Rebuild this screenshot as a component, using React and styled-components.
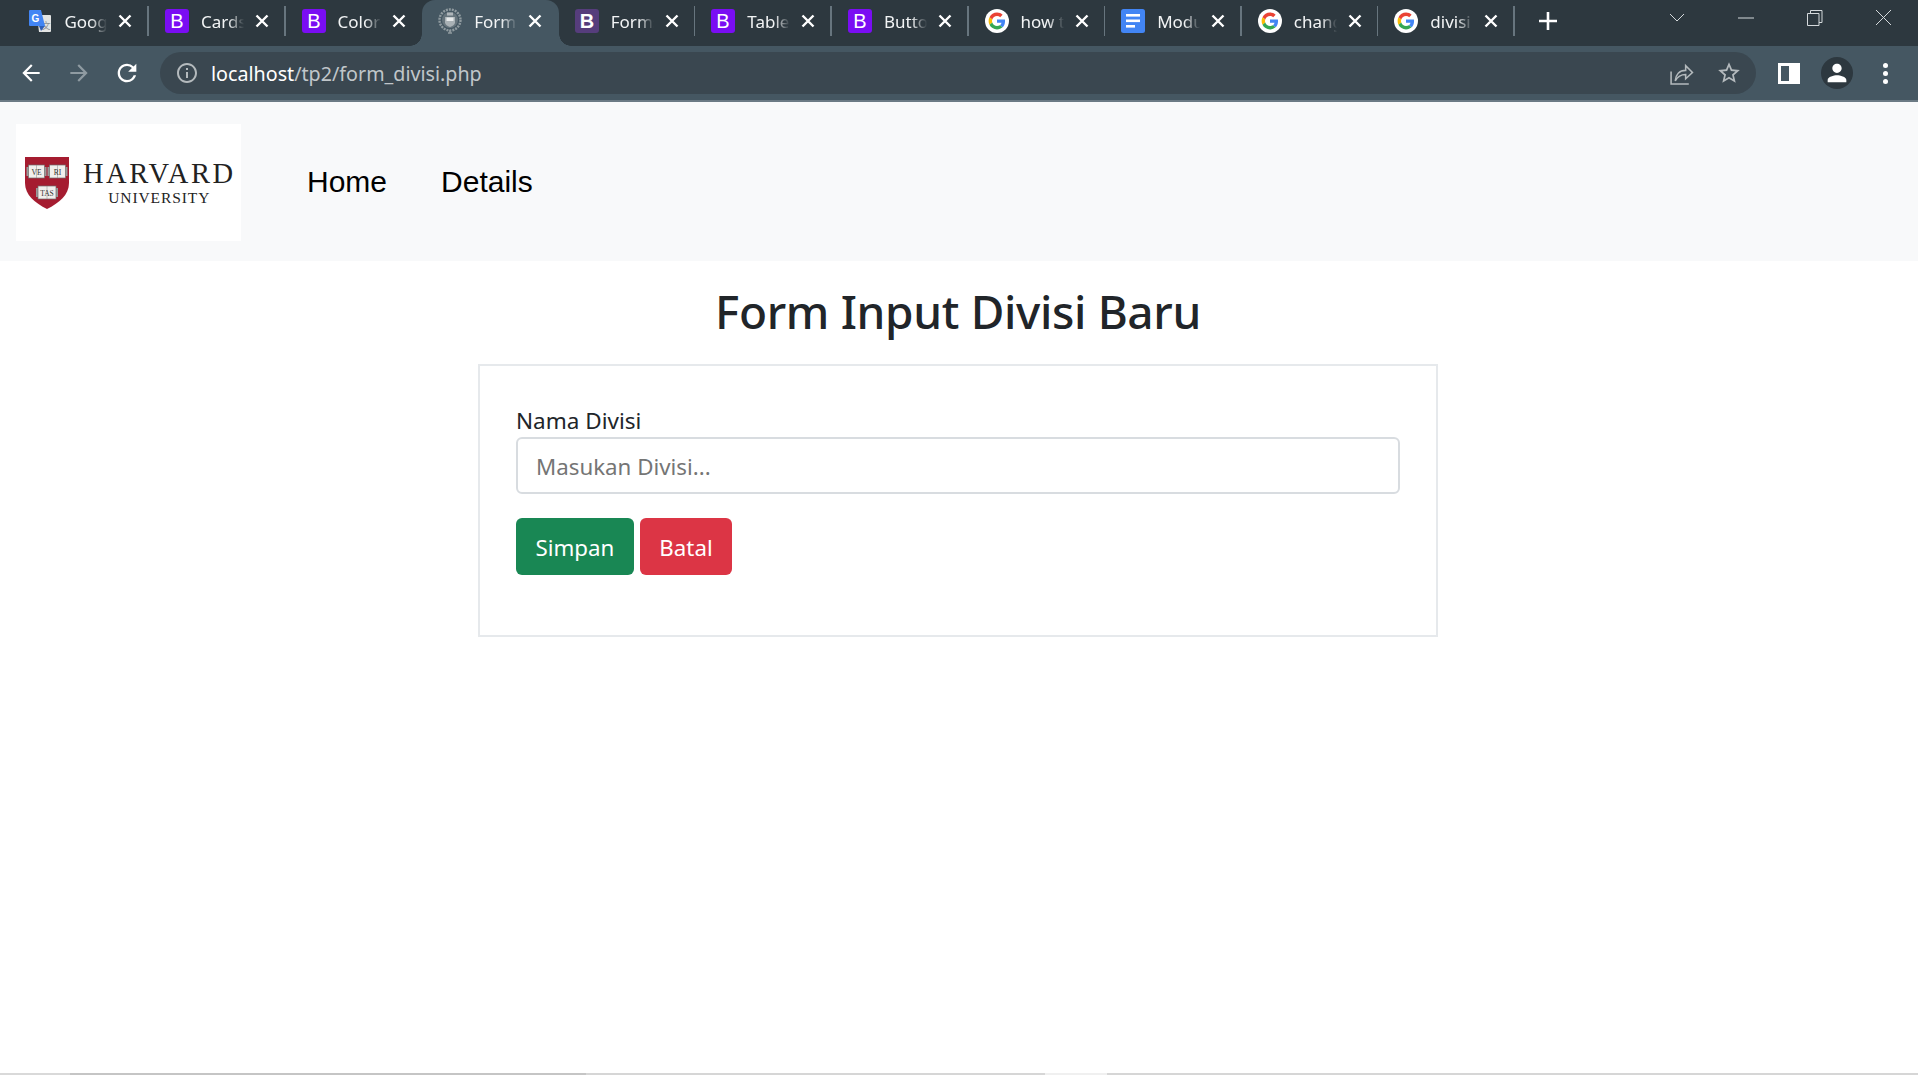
import React from "react";
import styled, { createGlobalStyle } from "styled-components";

const GlobalStyle = createGlobalStyle`
  * {
    box-sizing: border-box;
  }
  html,
  body {
    margin: 0;
    padding: 0;
    background: #fff;
    overflow: hidden;
  }
`;

const uiFont = `"Noto Sans", "Open Sans", sans-serif`;

const GoogleIcon = () => (
  <svg width="24" height="24" viewBox="0 0 24 24">
    <circle cx="12" cy="12" r="12" fill="#fff" />
    <g transform="translate(3.6 3.6) scale(0.35)">
      <path fill="#EA4335" d="M24 9.5c3.54 0 6.71 1.22 9.21 3.6l6.85-6.85C35.9 2.38 30.47 0 24 0 14.62 0 6.51 5.38 2.56 13.22l7.98 6.19C12.43 13.72 17.74 9.5 24 9.5z" />
      <path fill="#4285F4" d="M46.98 24.55c0-1.57-.15-3.09-.38-4.55H24v9.02h12.94c-.58 2.96-2.26 5.48-4.78 7.18l7.73 6c4.51-4.18 7.09-10.36 7.09-17.65z" />
      <path fill="#FBBC05" d="M10.53 28.59c-.48-1.45-.76-2.99-.76-4.59s.27-3.14.76-4.59l-7.98-6.19C.92 16.46 0 20.12 0 24c0 3.88.92 7.54 2.56 10.78l7.97-6.19z" />
      <path fill="#34A853" d="M24 48c6.48 0 11.93-2.13 15.89-5.81l-7.73-6c-2.15 1.45-4.92 2.3-8.16 2.3-6.26 0-11.57-4.22-13.47-9.91l-7.98 6.19C6.51 42.62 14.62 48 24 48z" />
    </g>
  </svg>
);

const BootstrapIcon = ({ $old }) => (
  <svg width="24" height="24" viewBox="0 0 24 24">
    <rect width="24" height="24" rx="3" fill={$old ? "#563d7c" : "#7a0df3"} />
    <text
      x="12"
      y="19"
      textAnchor="middle"
      fontFamily="Liberation Sans"
      fontWeight={$old ? "700" : "400"}
      fontSize="20"
      fill="#fff"
    >
      B
    </text>
  </svg>
);

const TranslateIcon = () => (
  <svg width="24" height="24" viewBox="0 0 24 24">
    <path d="M9 6h13a1 1 0 0 1 1 1v15a1 1 0 0 1-1 1H11z" fill="#e3e4e3" />
    <text x="18" y="20" textAnchor="middle" fontFamily="Noto Sans CJK SC" fontSize="9" fill="#8b8f92">
      文
    </text>
    <path d="M2 1h11l4 16H2a1 1 0 0 1-1-1V2a1 1 0 0 1 1-1z" fill="#4285f4" />
    <path d="M11 17l2 5 4-5z" fill="#2f5fb8" />
    <text x="7.5" y="12.5" textAnchor="middle" fontFamily="Liberation Sans" fontWeight="700" fontSize="10" fill="#fff">
      G
    </text>
  </svg>
);

const DocsIcon = () => (
  <svg width="24" height="24" viewBox="0 0 24 24">
    <rect width="24" height="24" rx="2.5" fill="#4285f4" />
    <rect x="5" y="5" width="14" height="2.6" fill="#fff" />
    <rect x="5" y="10.5" width="14" height="2.6" fill="#fff" />
    <rect x="5" y="16" width="9" height="2.6" fill="#fff" />
  </svg>
);

const CrestIcon = () => (
  <svg width="24" height="26" viewBox="0 0 24 26">
    <circle cx="12" cy="12" r="10.5" fill="none" stroke="#8f9a9f" strokeWidth="2.4" strokeDasharray="2 1" />
    <circle cx="12" cy="12" r="8" fill="#66747c" />
    <path d="M7 9h10v5.5c0 2-2.5 3.5-5 4.5-2.500-1-5-2.500-5-4.500z" fill="#a9b1b5" />
    <rect x="8.500" y="9.500" width="7" height="3.500" fill="#e6e9ea" />
    <rect x="9" y="4.500" width="6" height="3" fill="#aeb5b9" />
    <path d="M12 22v3M10 25h4" stroke="#8f9a9f" strokeWidth="1.600" />
  </svg>
);

const Book = ({ x, y, w, label }) => (
  <g>
    <rect x={x - 2} y={y + 2} width={w + 4} height="9" fill="#9a9a9a" />
    <rect x={x} y={y} width={w} height="13" fill="#f1efec" stroke="#6d6d6d" strokeWidth="0.7" />
    <path d={`M${x + w / 2} ${y}v13`} stroke="#8a8a8a" strokeWidth="0.5" />
    <text x={x + w / 2} y={y + 9.5} fontFamily="Liberation Serif" fontSize="7.5" fill="#333" textAnchor="middle">
      {label}
    </text>
  </g>
);

const tabs = [
  { title: "Google Translate", icon: <TranslateIcon /> },
  { title: "Cards", icon: <BootstrapIcon /> },
  { title: "Colors", icon: <BootstrapIcon /> },
  { title: "Form Input", icon: <CrestIcon />, active: true },
  { title: "Forms", icon: <BootstrapIcon $old /> },
  { title: "Tables", icon: <BootstrapIcon /> },
  { title: "Buttons", icon: <BootstrapIcon /> },
  { title: "how to", icon: <GoogleIcon /> },
  { title: "Module", icon: <DocsIcon /> },
  { title: "change", icon: <GoogleIcon /> },
  { title: "divisi", icon: <GoogleIcon /> },
];

const App = () => {
  return (
    <>
      <GlobalStyle />
      <Page>
        <TabStrip>
          {tabs.map((tab, index) => (
            <Tab key={index} $active={tab.active} $hideLine={tabs[index + 1]?.active}>
              <TabIcon>{tab.icon}</TabIcon>
              <TabTitle>{tab.title}</TabTitle>
              <CloseIcon viewBox="0 0 14 14">
                <path d="M1.500 1.500l11 11M12.500 1.500l-11 11" />
              </CloseIcon>
            </Tab>
          ))}
          <NewTab viewBox="0 0 18 18">
            <path d="M9 0v18M0 9h18" />
          </NewTab>
          <WindowButtons>
            <WindowButton>
              <svg width="16" height="10" viewBox="0 0 16 10">
                <path d="M1 1l7 7 7-7" />
              </svg>
            </WindowButton>
            <WindowButton>
              <svg width="16" height="2" viewBox="0 0 16 2">
                <path d="M0 1h16" />
              </svg>
            </WindowButton>
            <WindowButton>
              <svg width="16" height="16" viewBox="0 0 16 16">
                <path d="M.5 3.500h11.500v12H.5zM3.500 3.500v-3H15v12h-3" />
              </svg>
            </WindowButton>
            <WindowButton>
              <svg width="17" height="17" viewBox="0 0 17 17">
                <path d="M1 1l15 15M16 1L1 16" />
              </svg>
            </WindowButton>
          </WindowButtons>
        </TabStrip>

        <Toolbar>
          <NavIcons>
            <ChromeIcon viewBox="0 0 24 24" $size={26}>
              <path d="M20 11H7.830l5.590-5.590L12 4l-8 8 8 8 1.410-1.410L7.830 13H20v-2z" />
            </ChromeIcon>
            <ChromeIcon viewBox="0 0 24 24" $size={26} $muted>
              <path d="M4 11h12.170l-5.590-5.590L12 4l8 8-8 8-1.410-1.410L16.170 13H4v-2z" />
            </ChromeIcon>
            <ChromeIcon viewBox="0 0 24 24" $size={28}>
              <path d="M17.650 6.350A7.958 7.958 0 0 0 12 4c-4.420 0-7.990 3.580-7.990 8s3.570 8 7.990 8c3.730 0 6.840-2.550 7.730-6h-2.080A5.990 5.990 0 0 1 12 18c-3.310 0-6-2.690-6-6s2.690-6 6-6c1.660 0 3.140.690 4.220 1.780L13 11h7V4l-2.350 2.350z" />
            </ChromeIcon>
          </NavIcons>
          <UrlBar>
            <ChromeIcon viewBox="0 0 24 24" $size={24} $dim>
              <path d="M11 7h2v2h-2zm0 4h2v6h-2zm1-9C6.480 2 2 6.480 2 12s4.480 10 10 10 10-4.480 10-10S17.520 2 12 2zm0 18c-4.410 0-8-3.590-8-8s3.590-8 8-8 8 3.590 8 8-3.590 8-8 8z" />
            </ChromeIcon>
            <UrlText>
              <b>localhost</b>/tp2/form_divisi.php
            </UrlText>
            <UrlActions>
              <ShareIcon viewBox="0 0 24 24">
                <path d="M2 10v12h17" />
                <path d="M6 19c.4-6 4-10 10-10V4.500l6.500 6.500-6.500 6v-4c-4 0-7.500 1.500-10 6z" />
              </ShareIcon>
              <ChromeIcon viewBox="0 0 24 24" $size={26} $dim>
                <path d="M22 9.240l-7.190-.620L12 2 9.190 8.630 2 9.240l5.460 4.730L5.820 21 12 17.270 18.180 21l-1.630-7.030L22 9.240zM12 15.400l-3.760 2.270 1-4.280-3.320-2.880 4.380-.380L12 6.100l1.710 4.040 4.380.380-3.320 2.880 1 4.280L12 15.400z" />
              </ChromeIcon>
            </UrlActions>
          </UrlBar>
          <ToolActions>
            <SidePanel />
            <Avatar>
              <ChromeIcon viewBox="0 0 24 24" $size={28}>
                <path d="M12 12c2.210 0 4-1.790 4-4s-1.790-4-4-4-4 1.790-4 4 1.790 4 4 4zm0 2c-2.670 0-8 1.340-8 4v2h16v-2c0-2.660-5.330-4-8-4z" />
              </ChromeIcon>
            </Avatar>
            <Kebab>
              <i />
              <i />
              <i />
            </Kebab>
          </ToolActions>
        </Toolbar>

        <Navbar>
          <Logo>
            <svg width="44" height="52" viewBox="0 0 44 52">
              <path d="M0 0h44v26c0 12-10 20-22 26C10 46 0 38 0 26z" fill="#a51c30" />
              <Book x={3.5} y={8} w={16} label="VE" />
              <Book x={24.5} y={8} w={16} label="RI" />
              <Book x={13} y={29} w={18} label="TAS" />
            </svg>
            <LogoText>
              <span>HARVARD</span>
              <small>UNIVERSITY</small>
            </LogoText>
          </Logo>
          <NavLinks>
            <NavLink href="#">Home</NavLink>
            <NavLink href="#">Details</NavLink>
          </NavLinks>
        </Navbar>

        <Main>
          <Title>Form Input Divisi Baru</Title>
          <Card>
            <Label htmlFor="divisi">Nama Divisi</Label>
            <Input id="divisi" placeholder="Masukan Divisi..." />
            <Buttons>
              <Button $color="#198754">Simpan</Button>
              <Button $color="#dc3545">Batal</Button>
            </Buttons>
          </Card>
        </Main>

        <ScrollStrip>
          <ScrollPart $width={70} $color="#d9d9d9" />
          <ScrollPart $width={516} $color="#c5c5c5" />
          <ScrollPart $width={459} $color="#d6d6d6" />
          <ScrollPart $width={62} $color="#f0f0f0" />
          <ScrollPart $grow $color="#d6d6d6" />
        </ScrollStrip>
      </Page>
    </>
  );
};

const Page = styled.div`
  width: 1918px;
  height: 1075px;
  display: flex;
  flex-direction: column;
  font-family: ${uiFont};
  overflow: hidden;
`;

const TabStrip = styled.div`
  height: 46px;
  flex: none;
  display: flex;
  align-items: stretch;
  padding-left: 12.4px;
  background: #2d383f;
`;

const Tab = styled.div`
  position: relative;
  width: 136.6px;
  flex: none;
  display: flex;
  align-items: center;
  padding: 0 14px 4px 16px;
  background: ${(props) => (props.$active ? "#455762" : "transparent")};
  border-radius: ${(props) => (props.$active ? "13px 13px 0 0" : "0")};
  color: #f2f4f5;

  ::before {
    content: "";
    display: ${(props) => (props.$active ? "block" : "none")};
    position: absolute;
    left: -12px;
    bottom: 0;
    width: 12px;
    height: 12px;
    background: radial-gradient(circle at 0 0, transparent 11.5px, #455762 12px);
  }

  ::after {
    content: "";
    position: absolute;
    ${(props) =>
      props.$active
        ? `
      right: -12px;
      bottom: 0;
      width: 12px;
      height: 12px;
      background: radial-gradient(circle at 100% 0, transparent 11.5px, #455762 12px);
    `
        : `
      right: 0;
      top: 6px;
      width: 1.500px;
      height: 30px;
      background: ${props.$hideLine ? "transparent" : "#67757e"};
    `}
  }
`;

const TabIcon = styled.div`
  width: 24px;
  height: 26px;
  flex: none;
  display: flex;
  align-items: center;
  justify-content: center;
`;

const TabTitle = styled.div`
  width: 44px;
  margin-left: 12px;
  font-size: 17px;
  white-space: nowrap;
  overflow: hidden;
  -webkit-mask-image: linear-gradient(to right, #000 62%, transparent 98%);
  mask-image: linear-gradient(to right, #000 62%, transparent 98%);
`;

const CloseIcon = styled.svg`
  width: 14px;
  height: 14px;
  flex: none;
  margin-left: 10px;
  fill: none;
  stroke: #fff;
  stroke-width: 2.400;
`;

const NewTab = styled.svg`
  width: 18px;
  height: 18px;
  flex: none;
  align-self: center;
  margin: 0 0 4px 24px;
  fill: none;
  stroke: #fff;
  stroke-width: 2.600;
`;

const WindowButtons = styled.div`
  margin-left: 112px;
  display: flex;
  align-items: flex-start;
  gap: 53px;
  padding-top: 9px;
`;

const WindowButton = styled.div`
  width: 16px;
  height: 17px;
  display: flex;
  align-items: center;
  justify-content: center;

  svg {
    fill: none;
    stroke: #d4d9dc;
    stroke-width: 1;
    flex: none;
  }
`;

const Toolbar = styled.div`
  height: 56px;
  flex: none;
  display: flex;
  align-items: center;
  padding-left: 18px;
  background: #455762;
  border-bottom: 2px solid #6b7a84;
`;

const NavIcons = styled.div`
  width: 142px;
  display: flex;
  align-items: center;
  gap: 21.5px;
`;

const ChromeIcon = styled.svg`
  width: ${(props) => props.$size}px;
  height: ${(props) => props.$size}px;
  flex: none;
  fill: ${(props) => (props.$muted ? "#8f9ba2" : props.$dim ? "#b4babd" : "#fff")};
`;

const UrlBar = styled.div`
  width: 1596px;
  height: 42px;
  display: flex;
  align-items: center;
  padding: 0 14px 0 15px;
  background: #3a4750;
  border-radius: 21px;
`;

const UrlText = styled.div`
  margin-left: 12px;
  font-size: 19.7px;
  color: #c0c6ca;

  b {
    font-weight: 400;
    color: #fff;
  }
`;

const UrlActions = styled.div`
  margin-left: auto;
  display: flex;
  align-items: center;
  gap: 22.5px;
`;

const ShareIcon = styled.svg`
  width: 25px;
  height: 25px;
  fill: none;
  stroke: #b4babd;
  stroke-width: 1.500;
`;

const ToolActions = styled.div`
  display: flex;
  align-items: center;
  margin-left: 22px;
`;

const SidePanel = styled.div`
  width: 22px;
  height: 21px;
  border: 3px solid #fff;
  border-right-width: 11px;
  background: #455762;
`;

const Avatar = styled.div`
  width: 32px;
  height: 32px;
  margin-left: 21px;
  border-radius: 50%;
  background: #2d383f;
  display: flex;
  align-items: center;
  justify-content: center;
`;

const Kebab = styled.div`
  margin-left: 30px;
  display: flex;
  flex-direction: column;
  gap: 3px;

  i {
    display: block;
    width: 5px;
    height: 5px;
    border-radius: 50%;
    background: #fff;
  }
`;

const Navbar = styled.nav`
  height: 159px;
  flex: none;
  display: flex;
  align-items: center;
  padding: 0 16px;
  background: #f8f9fa;
`;

const Logo = styled.div`
  width: 225px;
  height: 117px;
  margin-top: 2px;
  display: flex;
  align-items: center;
  gap: 14px;
  padding-left: 9px;
  background: #fff;
`;

const LogoText = styled.div`
  display: flex;
  flex-direction: column;
  align-items: center;
  font-family: "Liberation Serif", serif;
  color: #222;

  span {
    font-size: 28.5px;
    line-height: 30px;
    letter-spacing: 2.500px;
  }

  small {
    font-size: 15.500px;
    line-height: 18px;
    letter-spacing: 0.900px;
  }
`;

const NavLinks = styled.div`
  display: flex;
  gap: 54px;
  margin-left: 66px;
`;

const NavLink = styled.a`
  font-family: "Liberation Sans", sans-serif;
  font-size: 30px;
  color: #000;
  text-decoration: none;
`;

const Main = styled.main`
  flex: 1;
  display: flex;
  flex-direction: column;
  align-items: center;
  padding-right: 2px;
`;

const Title = styled.h1`
  margin: 17px 0 0;
  height: 86px;
  font-size: 46px;
  line-height: 66px;
  font-weight: 500;
  letter-spacing: -0.35px;
  color: #212529;
`;

const Card = styled.div`
  width: 960px;
  height: 273px;
  display: flex;
  flex-direction: column;
  padding: 38px 36px 0;
  border: 2px solid #e6e9ec;
`;

const Label = styled.label`
  font-size: 22.5px;
  line-height: 33px;
  color: #212529;
`;

const Input = styled.input`
  width: 100%;
  height: 57px;
  padding: 2px 18px 0;
  font-family: ${uiFont};
  font-size: 22.3px;
  color: #212529;
  background: #fff;
  border: 2px solid #d8dce0;
  border-radius: 6px;
  outline: none;

  ::placeholder {
    color: #6c757d;
    opacity: 1;
  }
`;

const Buttons = styled.div`
  display: flex;
  gap: 6px;
  margin-top: 24px;
`;

const Button = styled.button`
  height: 57px;
  padding: 2px 19.5px 0;
  font-family: ${uiFont};
  font-size: 22.3px;
  color: #fff;
  background: ${(props) => props.$color};
  border: none;
  border-radius: 6px;
`;

const ScrollStrip = styled.div`
  height: 2px;
  flex: none;
  display: flex;
`;

const ScrollPart = styled.div`
  width: ${(props) => (props.$grow ? "auto" : `${props.$width}px`)};
  flex: ${(props) => (props.$grow ? 1 : "none")};
  background: ${(props) => props.$color};
`;

export default App;
